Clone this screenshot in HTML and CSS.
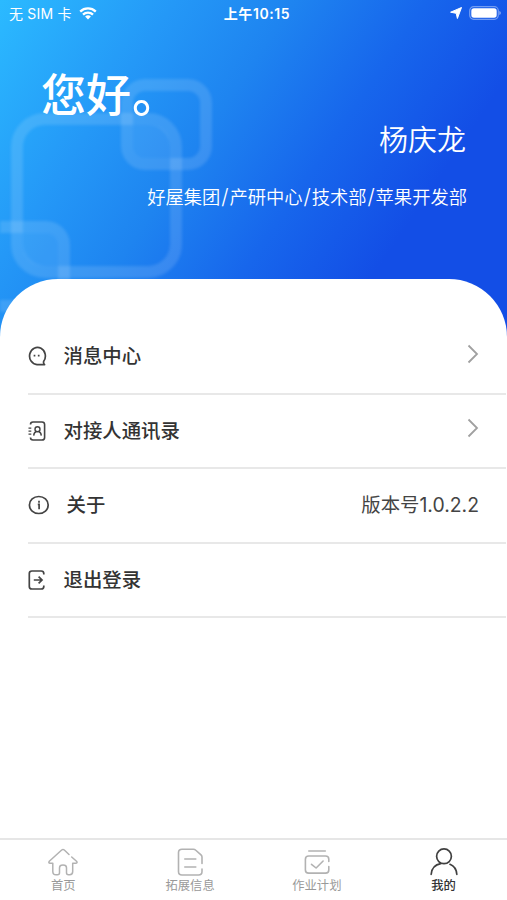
FILE: index.html
```
<!DOCTYPE html>
<html lang="zh-CN">
<head>
  <meta charset="UTF-8" />
  <title>我的</title>
  <meta name="viewport" content="width=device-width, initial-scale=1.0" />
  <link rel="stylesheet" href="styles.css">
</head>
<body>
  <header class="header">
    <!-- 背景装饰 -->
    <svg class="deco" width="507" height="340" viewBox="0 0 507 340" fill="none">
      <g stroke="#fff" stroke-opacity=".13" stroke-width="12">
        <rect x="17" y="119" width="159" height="153" rx="28" />
        <rect x="127" y="85" width="79" height="79" rx="18" />
        <rect x="-15" y="227" width="79" height="79" rx="18" />
      </g>
      <g fill="#fff" fill-opacity=".09">
        <path d="M133 125h17a20 20 0 0 1 20 20v13h-25a12 12 0 0 1-12-12z" />
        <path d="M23 233h23a12 12 0 0 1 12 12v21h-15a20 20 0 0 1-20-20z" />
      </g>
    </svg>

    <div class="statusbar">
      <div class="carrier">
        <span>无 SIM 卡</span>
        <svg width="18" height="13" viewBox="0 0 18 13" fill="none" stroke="#fff" stroke-width="2.3">
          <path d="M1.2 4.6a11.2 11.2 0 0 1 15.6 0M4 7.7a7.2 7.2 0 0 1 10 0" />
          <path d="M9 12.4 6.1 9.6a4.2 4.2 0 0 1 5.8 0z" fill="#fff" stroke="none" />
        </svg>
      </div>
      <div class="time">上午10:15</div>
      <div class="power">
        <svg width="12" height="12" viewBox="0 0 12 12"><path d="M11.5.5 7.4 11.5 6.2 6.3.6 5.2z" fill="#fff" stroke="#fff" stroke-width="1" stroke-linejoin="round" /></svg>
        <svg width="32" height="14" viewBox="0 0 32 14">
          <rect x=".7" y=".7" width="28.6" height="12.6" rx="4" fill="none" stroke="#fff" stroke-opacity=".4" stroke-width="1.2" />
          <rect x="2.3" y="2.3" width="25.4" height="9.4" rx="2.6" fill="#fff" />
          <path d="M30.3 5q1.6.7 1.6 2t-1.6 2z" fill="#fff" fill-opacity=".5" />
        </svg>
      </div>
    </div>

    <h1 class="hello">您好<span class="stop">。</span></h1>
    <div class="name">杨庆龙</div>
    <div class="dept">好屋集团<i>/</i>产研中心<i>/</i>技术部<i>/</i>苹果开发部</div>
  </header>

  <main class="sheet">
    <ul class="menu">
      <li class="item">
        <svg class="icon" width="19" height="20" viewBox="0 0 19 20" fill="none" stroke="#444" stroke-width="1.7">
          <path d="M15.7 15.3A7.900 8.600 0 1 0 9 18.600h7.600q-1.500-1-.9-3.300z" stroke-linejoin="round" />
          <path d="M6.500 8.700v1.800M10.700 8.700v1.800" />
        </svg>
        <span class="label">消息中心</span>
        <svg class="arrow" width="12" height="20" viewBox="0 0 12 20"><path d="M1.5 1.5 10 10l-8.500 8.500" fill="none" stroke="#a0a0a0" stroke-width="1.8" /></svg>
      </li>
      <li class="item">
        <svg class="icon" width="19" height="20" viewBox="0 0 19 20" fill="none" stroke="#444" stroke-width="1.6">
          <path d="M2.500 3.500Q2.500 1 5 1h9q2.600 0 2.600 2.600v12.800q0 2.600-2.600 2.600H5q-2.500 0-2.500-2.500" />
          <path d="M.5 7.200h2.800M.5 10.200h2.800M.5 13.200h2.800" stroke-width="1.2" />
          <circle cx="9.500" cy="8.200" r="2.500" stroke-width="1.4" />
          <path d="M5.700 14.600q.2-3.200 2.600-4.100M10.700 10.500q2.400.9 2.600 4.100" stroke-width="1.4" />
        </svg>
        <span class="label">对接人通讯录</span>
        <svg class="arrow" width="12" height="20" viewBox="0 0 12 20"><path d="M1.5 1.5 10 10l-8.500 8.500" fill="none" stroke="#a0a0a0" stroke-width="1.8" /></svg>
      </li>
      <li class="item">
        <svg class="icon" width="22" height="20" viewBox="0 0 22 20" fill="none" stroke="#444" stroke-width="1.7">
          <ellipse cx="10.800" cy="10" rx="9.400" ry="8.500" />
          <path d="M11 5.700v2M9.800 9.300h1.300v5" />
        </svg>
        <span class="label">关于</span>
        <span class="version">版本号1.0.2.2</span>
      </li>
      <li class="item">
        <svg class="icon" width="19" height="20" viewBox="0 0 19 20" fill="none" stroke="#444" stroke-width="1.7">
          <path d="M15.800 4.500V3.600Q15.800 1 13.200 1H3.900Q1.300 1 1.300 3.600v12.800Q1.300 19 3.900 19h9.300q2.600 0 2.600-2.600v-.9" />
          <path d="M5.800 10h8M10.600 6.700l3.400 3.300-3.400 3.300" />
        </svg>
        <span class="label">退出登录</span>
      </li>
    </ul>
  </main>

  <nav class="tabbar">
    <a class="tab">
      <svg width="32" height="30" viewBox="0 0 32 30" fill="none" stroke="#b2b2b2" stroke-width="1.5" stroke-linecap="round" stroke-linejoin="round">
        <path d="M22 7.500 17.300 3q-1.300-1.100-2.600 0L2.300 14.300q-1.300 1.700.9 2h2.600v8.200q0 3.300 3.200 3.300h1.500q2 0 2-2v-5q0-2.700 3.500-2.700t3.500 2.700v5q0 2 2 2h1.200q3 0 3-3.200v-8.300h3.200q2-.4.600-2L24.700 10" />
      </svg>
      <span>首页</span>
    </a>
    <a class="tab">
      <svg width="32" height="30" viewBox="0 0 32 30" fill="none" stroke="#b2b2b2" stroke-width="1.6" stroke-linecap="round" stroke-linejoin="round">
        <path d="M28 16.500V10q0-1.300-1-2.200L21.500 3q-.8-.8-2-.8H8Q4.500 2.200 4.500 5.500v19Q4.500 28 8 28h16.500q3.500 0 3.500-3.500V22" />
        <path d="M10.800 12h11M10.800 20h11" />
      </svg>
      <span>拓展信息</span>
    </a>
    <a class="tab">
      <svg width="32" height="30" viewBox="0 0 32 30" fill="none" stroke="#b2b2b2" stroke-width="1.6" stroke-linecap="round" stroke-linejoin="round">
        <path d="M7.800 4h16.500" />
        <path d="M27.800 14.500v-2.300q0-3.200-3.300-3.200H7.700q-3.300 0-3.300 3.200v10.700q0 3.200 3.300 3.200h16.800q3.300 0 3.300-3.200V19.500" />
        <path d="m10.500 17.300 4.600 3.700 7-7" />
      </svg>
      <span>作业计划</span>
    </a>
    <a class="tab active">
      <svg width="32" height="30" viewBox="0 0 32 30" fill="none" stroke="#404040" stroke-width="1.7" stroke-linecap="round">
        <circle cx="16" cy="9.300" r="7.400" />
        <path d="M3.200 27.300Q4 18.200 12.700 16.700M22 17.300q6.300 2.500 6.800 10" />
      </svg>
      <span>我的</span>
    </a>
  </nav>
</body>
</html>
```
FILE: styles.css
```
* { box-sizing: border-box; }
body {
  margin: 0;
  height: 900px;
  display: flex;
  flex-direction: column;
  overflow: hidden;
  background: #fff;
  color: #333;
  font-family: Inter, "Noto Sans CJK SC", sans-serif;
}
.header {
  position: relative;
  height: 340px;
  flex-shrink: 0;
  color: #fff;
  background: linear-gradient(124deg, #2bbaff 0%, #2498f7 24%, #1e84f0 40%, #1766ec 58%, #134ee6 76%, #134ee6 100%);
}
.deco {
  position: absolute;
  top: 0;
  left: 0;
  filter: blur(1.8px);
}
.statusbar {
  position: relative;
  display: grid;
  grid-template-columns: 1fr auto 1fr;
  align-items: center;
  height: 27px;
  padding: 0 6px 0 9px;
  font-size: 14px;
}
.carrier, .power {
  display: flex;
  align-items: center;
}
.carrier {
  gap: 7px;
  letter-spacing: .2px;
}
.carrier span, .time { margin-top: -2px; }
.power {
  justify-content: flex-end;
  gap: 7px;
}
.power svg { margin-top: -1px; }
.time {
  padding-left: 4px;
  font-weight: 600;
  letter-spacing: .6px;
}
.hello {
  position: relative;
  margin: 34px 0 0 41px;
  font-size: 45px;
  line-height: 68px;
  font-weight: 500;
}
.stop {
  margin-left: 1px;
  font-size: 49px;
}
.name {
  position: relative;
  margin: -11px 41px 0 0;
  font-size: 29px;
  line-height: 44px;
  font-weight: 350;
  text-align: right;
}
.dept {
  position: relative;
  margin: 20px 40px 0 0;
  font-size: 18.3px;
  line-height: 28px;
  font-weight: 350;
  text-align: right;
}
.dept i {
  padding: 0 .9px;
  font-size: 21px;
  line-height: 1;
  font-style: normal;
}
.sheet {
  position: relative;
  flex: 1;
  margin-top: -61px;
  padding: 41px 1px 0 28px;
  background: #fff;
  border-radius: 58px 58px 0 0;
}
.menu {
  margin: 0;
  padding: 0;
  list-style: none;
}
.item {
  display: flex;
  align-items: center;
  height: 74.6px;
  padding-right: 27px;
  border-bottom: 2px solid #e8e8e8;
}
.icon { margin-right: 16.5px; }
.label {
  flex: 1;
  margin-top: -3px;
  font-size: 19.4px;
  font-weight: 500;
}
.arrow { margin-top: -5px; }
.version {
  margin-top: -4px;
  font-size: 19.4px;
  color: #444;
}
.tabbar {
  display: flex;
  height: 62px;
  flex-shrink: 0;
  border-top: 2px solid #e6e6e6;
}
.tab {
  flex: 1;
  display: flex;
  flex-direction: column;
  align-items: center;
  padding-top: 7px;
  font-size: 12.3px;
  line-height: 18px;
  color: #999;
}
.active {
  color: #333;
  font-weight: 500;
}
```
